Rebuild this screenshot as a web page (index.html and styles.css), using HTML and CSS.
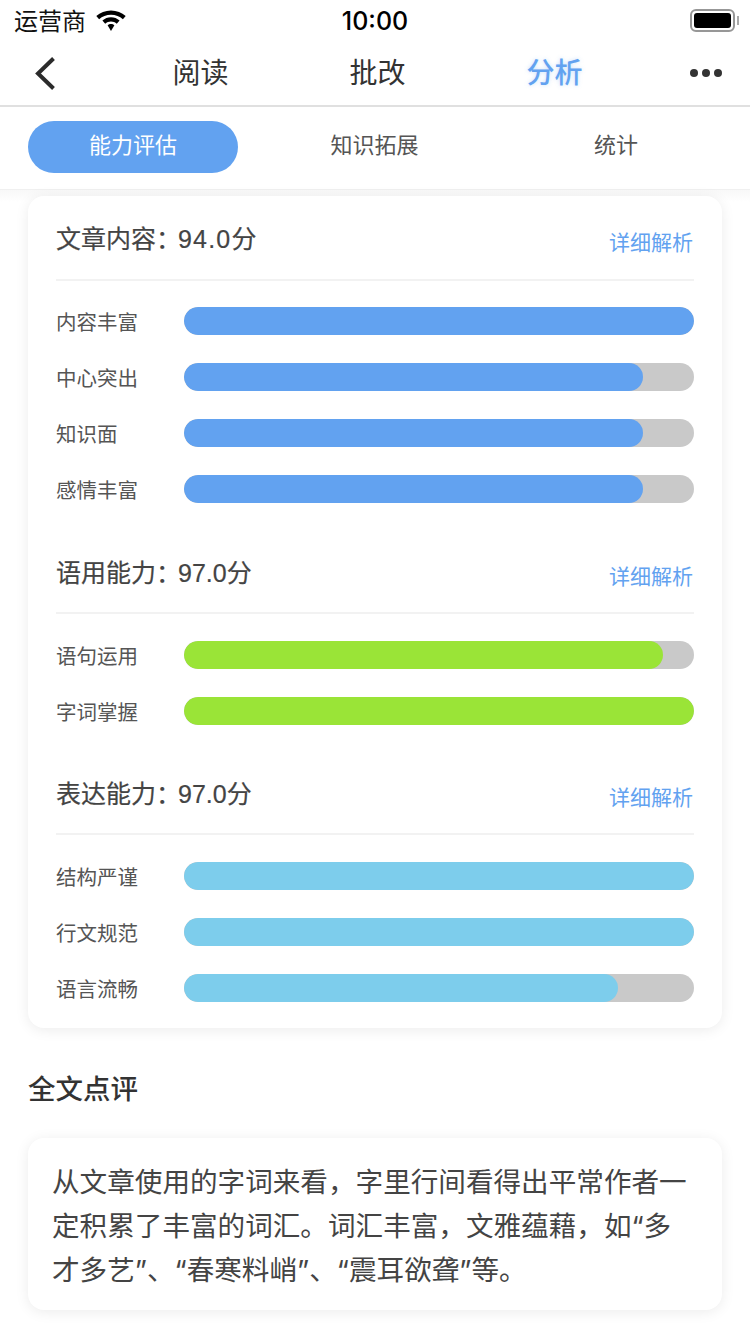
FILE: index.html
```html
<!DOCTYPE html>
<html>
<head>
<meta charset="utf-8">
<title>分析</title>
<link rel="stylesheet" href="styles.css">
</head>
<body>

<div class="status-bar">
  <div class="carrier"><span class="carrier-name">运营商</span>
    <svg class="wifi" width="30" height="22" viewBox="0 0 30 22">
      <path d="M15 0.5C9.3 0.5 4.2 2.6 0.3 6L3.1 9.2C6.3 6.4 10.4 4.7 15 4.7S23.7 6.4 26.9 9.2L29.7 6C25.8 2.6 20.7 0.5 15 0.5Z"/>
      <path d="M15 7.2C11.8 7.2 8.8 8.4 6.4 10.5L9.2 13.7C10.8 12.3 12.8 11.4 15 11.4S19.2 12.3 20.8 13.7L23.6 10.5C21.2 8.4 18.2 7.2 15 7.2Z"/>
      <path d="M15 14C13.7 14 12.6 14.5 11.6 15.3L15 21L18.4 15.3C17.4 14.5 16.3 14 15 14Z"/>
    </svg>
  </div>
  <div class="clock">10:00</div>
  <div class="battery"><span class="battery-level"></span></div>
</div>

<div class="nav-bar">
  <svg class="back" width="24" height="40" viewBox="0 0 24 40">
    <path d="M20.5 4.5L5 19.5L20.5 34.5" fill="none" stroke="#2b2b2b" stroke-width="4"/>
  </svg>
  <div class="nav-tab">阅读</div>
  <div class="nav-tab">批改</div>
  <div class="nav-tab active">分析</div>
  <div class="more"><i></i><i></i><i></i></div>
</div>

<div class="sub-tabs">
  <div class="sub-tab active">能力评估</div>
  <div class="sub-tab">知识拓展</div>
  <div class="sub-tab">统计</div>
</div>

<div class="content">
  <div class="card scores">
    <div class="section-header first">
      <div class="section-title">文章内容：<span class="num">94.0</span>分</div>
      <div class="detail-link">详细解析</div>
    </div>
    <div class="bar-row"><div class="bar-label">内容丰富</div><div class="bar"><div class="fill blue" style="width:100%"></div></div></div>
    <div class="bar-row"><div class="bar-label">中心突出</div><div class="bar"><div class="fill blue" style="width:90%"></div></div></div>
    <div class="bar-row"><div class="bar-label">知识面</div><div class="bar"><div class="fill blue" style="width:90%"></div></div></div>
    <div class="bar-row"><div class="bar-label">感情丰富</div><div class="bar"><div class="fill blue" style="width:90%"></div></div></div>

    <div class="section-header">
      <div class="section-title">语用能力：<span class="num small">97.0</span>分</div>
      <div class="detail-link">详细解析</div>
    </div>
    <div class="bar-row"><div class="bar-label">语句运用</div><div class="bar"><div class="fill green" style="width:94%"></div></div></div>
    <div class="bar-row"><div class="bar-label">字词掌握</div><div class="bar"><div class="fill green" style="width:100%"></div></div></div>

    <div class="section-header">
      <div class="section-title">表达能力：<span class="num small">97.0</span>分</div>
      <div class="detail-link">详细解析</div>
    </div>
    <div class="bar-row"><div class="bar-label">结构严谨</div><div class="bar"><div class="fill sky" style="width:100%"></div></div></div>
    <div class="bar-row"><div class="bar-label">行文规范</div><div class="bar"><div class="fill sky" style="width:100%"></div></div></div>
    <div class="bar-row"><div class="bar-label">语言流畅</div><div class="bar"><div class="fill sky" style="width:85%"></div></div></div>
  </div>

  <h2 class="comment-title">全文点评</h2>
  <div class="card comment">从文章使用的字词来看，字里行间看得出平常作者一定积累了丰富的词汇。词汇丰富，文雅蕴藉，如“多才多艺”、“春寒料峭”、“震耳欲聋”等。</div>
</div>

</body>
</html>
```

FILE: styles.css
```css
* {
  box-sizing: border-box;
}

html, body {
  margin: 0;
  height: 1334px;
  overflow: hidden;
  background: #fff;
}

body {
  font-family: "Liberation Sans", "Noto Sans CJK SC", sans-serif;
  color: #444;
}

.status-bar {
  height: 41px;
  display: flex;
  align-items: center;
  justify-content: space-between;
  padding: 0 14px;
  position: relative;
}

.carrier {
  display: flex;
  align-items: center;
  font-size: 24px;
  color: #111;
}

.carrier-name {
  margin-top: -2px;
}

.wifi {
  margin-left: 10px;
  flex: none;
}

.clock {
  position: absolute;
  left: 0;
  right: 0;
  text-align: center;
  font-family: "Inter", sans-serif;
  font-size: 25px;
  font-weight: 500;
  color: #000;
}

.battery {
  width: 45px;
  height: 23px;
  margin-left: auto;
  margin-right: 1px;
  margin-top: -1px;
  border: 2px solid #979797;
  border-radius: 6px;
  padding: 2px;
  position: relative;
}

.battery::after {
  content: "";
  position: absolute;
  right: -6px;
  top: 5px;
  width: 2px;
  height: 9px;
  background: #aaa;
}

.battery-level {
  display: block;
  height: 100%;
  background: #000;
  border-radius: 3px;
}

.nav-bar {
  height: 66px;
  display: flex;
  align-items: center;
  border-bottom: 2px solid #e0e0e0;
  position: relative;
  padding-bottom: 4px;
}

.back {
  position: absolute;
  left: 33px;
  top: 13px;
}

.nav-tab {
  position: relative;
  width: 177px;
  text-align: center;
  font-size: 28px;
  color: #333;
}

.nav-tab:first-of-type {
  margin-left: 112px;
}

.nav-tab.active {
  color: #62a2f0;
  font-weight: 500;
  text-shadow: 0 0 4px rgba(98, 162, 240, .35);
}

.more {
  position: absolute;
  right: 28px;
  top: 28px;
  display: flex;
  gap: 4px;
}

.more i {
  width: 8px;
  height: 8px;
  border-radius: 50%;
  background: #333;
}

.sub-tabs {
  height: 83px;
  display: flex;
  align-items: flex-start;
  padding: 14px 28px 0;
  border-bottom: 1px solid #f0f0f0;
}

.sub-tab {
  flex: none;
  width: 210px;
  height: 52px;
  margin-right: 31.5px;
  border-radius: 26px;
  line-height: 50px;
  text-align: center;
  font-size: 22px;
  color: #555;
}

.sub-tab.active {
  background: #62a2f0;
  color: #fff;
}

.content {
  padding: 6px 28px 0;
  background: linear-gradient(#f8f8f8, #fff 12px);
}

.card {
  background: #fff;
  border-radius: 16px;
  box-shadow: 0 2px 14px rgba(0, 0, 0, .08);
}

.scores {
  height: 832px;
  padding: 0 28px;
}

.section-header {
  height: 82.5px;
  margin-bottom: 27px;
  padding-top: 21.5px;
  display: flex;
  justify-content: space-between;
  border-bottom: 2px solid #f2f2f2;
}

.section-header.first {
  height: 85px;
  margin-bottom: 26px;
  padding-top: 23px;
}

.section-title {
  font-size: 25px;
  line-height: 40px;
  color: #444;
  -webkit-text-stroke: 0.2px #444;
}

.num {
  font-size: 25px;
  letter-spacing: 1.2px;
  margin-left: -3px;
}

.num.small {
  letter-spacing: 0;
}

.detail-link {
  font-size: 21px;
  line-height: 48px;
  margin-right: 1px;
  color: #62a2f0;
}

.bar-row {
  display: flex;
  align-items: center;
  height: 28px;
  margin-bottom: 28px;
}

.bar-label {
  width: 128px;
  font-size: 20.5px;
  color: #555;
}

.bar {
  flex: 1;
  height: 28px;
  border-radius: 14px;
  background: #c9c9c9;
  overflow: hidden;
}

.fill {
  height: 100%;
  border-radius: 14px;
}

.fill.blue {
  background: #62a2f0;
}

.fill.green {
  background: #9ae437;
}

.fill.sky {
  background: #7dcdec;
}

.comment-title {
  margin: 44px 0 30px;
  font-size: 27.5px;
  line-height: 36px;
  font-weight: 500;
  color: #333;
}

.comment {
  height: 172px;
  padding: 22px 30px 0 24px;
  font-family: "Inter", "Noto Sans CJK SC", sans-serif;
  font-size: 27.6px;
  line-height: 44px;
  color: #444;
}
```
